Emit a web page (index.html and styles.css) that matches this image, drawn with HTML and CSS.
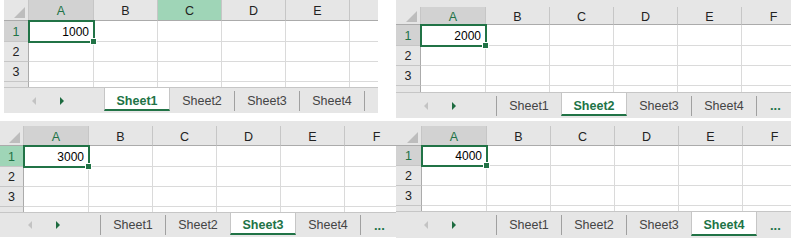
FILE: index.html
```html
<!DOCTYPE html>
<html>
<head>
<meta charset="utf-8">
<link rel="stylesheet" href="styles.css">
</head>
<body>
<div class="page">
  <div class="top">
    <div class="sheet p1">
      <div class="grid head">
        <div class="corner"><svg width="11" height="11" viewBox="0 0 11 11"><polygon points="11,0 11,11 0,11" fill="#bdbdbd"/></svg></div>
        <div class="ch sel">A</div><div class="ch">B</div><div class="ch hov">C</div><div class="ch">D</div><div class="ch">E</div><div class="ch"></div>
      </div>
      <div class="grid r1">
        <div class="rh sel">1</div><div class="c a1">1000<span class="handle"></span></div><div class="c"></div><div class="c"></div><div class="c"></div><div class="c"></div><div class="c"></div>
      </div>
      <div class="grid r2">
        <div class="rh">2</div><div class="c"></div><div class="c"></div><div class="c"></div><div class="c"></div><div class="c"></div><div class="c"></div>
      </div>
      <div class="grid r3">
        <div class="rh">3</div><div class="c"></div><div class="c"></div><div class="c"></div><div class="c"></div><div class="c"></div><div class="c"></div>
      </div>
      <div class="grid rp">
        <div class="rh"></div><div class="c"></div><div class="c"></div><div class="c"></div><div class="c"></div><div class="c"></div><div class="c"></div>
      </div>
      <div class="tabbar">
        <div class="nav"><span class="arr-l"></span><span class="arr-r"></span></div>
        <div class="tab active">Sheet1</div>
        <div class="tab">Sheet2</div><span class="sep"></span>
        <div class="tab">Sheet3</div><span class="sep"></span>
        <div class="tab">Sheet4</div><span class="sep"></span>
      </div>
    </div>

    <div class="sheet p2">
      <div class="strip"></div>
      <div class="grid head">
        <div class="corner"><svg width="11" height="11" viewBox="0 0 11 11"><polygon points="11,0 11,11 0,11" fill="#bdbdbd"/></svg></div>
        <div class="ch sel">A</div><div class="ch">B</div><div class="ch">C</div><div class="ch">D</div><div class="ch">E</div><div class="ch">F</div>
      </div>
      <div class="grid r1">
        <div class="rh sel">1</div><div class="c a1">2000<span class="handle"></span></div><div class="c"></div><div class="c"></div><div class="c"></div><div class="c"></div><div class="c"></div>
      </div>
      <div class="grid r2">
        <div class="rh">2</div><div class="c"></div><div class="c"></div><div class="c"></div><div class="c"></div><div class="c"></div><div class="c"></div>
      </div>
      <div class="grid r3">
        <div class="rh">3</div><div class="c"></div><div class="c"></div><div class="c"></div><div class="c"></div><div class="c"></div><div class="c"></div>
      </div>
      <div class="grid rp">
        <div class="rh"></div><div class="c"></div><div class="c"></div><div class="c"></div><div class="c"></div><div class="c"></div><div class="c"></div>
      </div>
      <div class="tabbar">
        <div class="nav"><span class="arr-l"></span><span class="arr-r"></span></div>
        <span class="sep"></span>
        <div class="tab">Sheet1</div>
        <div class="tab active">Sheet2</div>
        <div class="tab">Sheet3</div><span class="sep"></span>
        <div class="tab">Sheet4</div><span class="sep"></span>
        <div class="more">...</div>
      </div>
    </div>
  </div>

  <div class="bottom">
    <div class="sheet p3">
      <div class="strip"></div>
      <div class="grid head">
        <div class="corner"><svg width="11" height="11" viewBox="0 0 11 11"><polygon points="11,0 11,11 0,11" fill="#bdbdbd"/></svg></div>
        <div class="ch sel">A</div><div class="ch">B</div><div class="ch">C</div><div class="ch">D</div><div class="ch">E</div><div class="ch">F</div>
      </div>
      <div class="grid r1">
        <div class="rh hov">1</div><div class="c a1">3000<span class="handle"></span></div><div class="c"></div><div class="c"></div><div class="c"></div><div class="c"></div><div class="c"></div>
      </div>
      <div class="grid r2">
        <div class="rh">2</div><div class="c"></div><div class="c"></div><div class="c"></div><div class="c"></div><div class="c"></div><div class="c"></div>
      </div>
      <div class="grid r3">
        <div class="rh">3</div><div class="c"></div><div class="c"></div><div class="c"></div><div class="c"></div><div class="c"></div><div class="c"></div>
      </div>
      <div class="grid rp">
        <div class="rh"></div><div class="c"></div><div class="c"></div><div class="c"></div><div class="c"></div><div class="c"></div><div class="c"></div>
      </div>
      <div class="tabbar">
        <div class="nav"><span class="arr-l"></span><span class="arr-r"></span></div>
        <span class="sep"></span>
        <div class="tab">Sheet1</div><span class="sep"></span>
        <div class="tab">Sheet2</div>
        <div class="tab active">Sheet3</div>
        <div class="tab">Sheet4</div><span class="sep"></span>
        <div class="more">...</div>
      </div>
    </div>

    <div class="sheet p4">
      <div class="strip"></div>
      <div class="grid head">
        <div class="corner"><svg width="11" height="11" viewBox="0 0 11 11"><polygon points="11,0 11,11 0,11" fill="#bdbdbd"/></svg></div>
        <div class="ch sel">A</div><div class="ch">B</div><div class="ch">C</div><div class="ch">D</div><div class="ch">E</div><div class="ch">F</div>
      </div>
      <div class="grid r1">
        <div class="rh sel">1</div><div class="c a1">4000<span class="handle"></span></div><div class="c"></div><div class="c"></div><div class="c"></div><div class="c"></div><div class="c"></div>
      </div>
      <div class="grid r2">
        <div class="rh">2</div><div class="c"></div><div class="c"></div><div class="c"></div><div class="c"></div><div class="c"></div><div class="c"></div>
      </div>
      <div class="grid r3">
        <div class="rh">3</div><div class="c"></div><div class="c"></div><div class="c"></div><div class="c"></div><div class="c"></div><div class="c"></div>
      </div>
      <div class="grid rp">
        <div class="rh"></div><div class="c"></div><div class="c"></div><div class="c"></div><div class="c"></div><div class="c"></div><div class="c"></div>
      </div>
      <div class="tabbar">
        <div class="nav"><span class="arr-l"></span><span class="arr-r"></span></div>
        <span class="sep"></span>
        <div class="tab">Sheet1</div><span class="sep"></span>
        <div class="tab">Sheet2</div><span class="sep"></span>
        <div class="tab">Sheet3</div>
        <div class="tab active">Sheet4</div>
        <div class="more">...</div>
      </div>
    </div>
  </div>
</div>
</body>
</html>
```
FILE: styles.css
```css
* { box-sizing: border-box; }
html, body { margin: 0; padding: 0; background: #fff; }
body {
  width: 791px;
  height: 241px;
  overflow: hidden;
  font-family: "Liberation Sans", Arial, sans-serif;
}
.page { display: flex; flex-direction: column; }
.top { display: flex; align-items: flex-start; height: 121px; }
.bottom { display: flex; align-items: flex-start; }

.sheet { display: flex; flex-direction: column; overflow: hidden; background: #fff; flex: none; }
.p1 { margin-left: 4px; width: 374px; --st: 0px; --hh: 21px; --r1: 21px; --r2: 20px; --r3: 20px; --rp: 5px; --tb: 26px; --rw: 25px; }
.p2 { margin-left: 18px; width: 395px; --st: 7px; --hh: 18px; --r1: 21px; --r2: 20px; --r3: 20px; --rp: 6px; --tb: 26px; --rw: 25px; }
.p3 { width: 396px; --st: 5px; --hh: 20px; --r1: 21px; --r2: 20px; --r3: 20px; --rp: 5px; --tb: 25px; --rw: 24px; }
.p4 { width: 395px; --st: 5px; --hh: 20px; --r1: 20px; --r2: 20px; --r3: 20px; --rp: 5px; --tb: 27px; --rw: 26px; }

.strip { height: var(--st); background: #e6e6e6; flex: none; }
.grid {
  display: grid;
  grid-template-columns: var(--rw) 65px repeat(5, 64px);
  flex: none;
}
.head { height: var(--hh); background: #e6e6e6; }
.r1 { height: var(--r1); }
.r2 { height: var(--r2); }
.r3 { height: var(--r3); }
.rp { height: var(--rp); }

.corner {
  border-right: 1px solid #c6c6c6;
  border-bottom: 1px solid #ababab;
  display: flex;
  align-items: flex-end;
  justify-content: flex-end;
  padding: 0 3px 2px 0;
}
.corner svg { display: block; }
.ch {
  border-right: 1px solid #c6c6c6;
  border-bottom: 1px solid #ababab;
  display: flex;
  align-items: center;
  justify-content: center;
  font-size: 12.5px;
  color: #222;
  padding-top: 2px;
}
.ch.sel { background: #d2d2d2; color: #217346; }
.ch.hov { background: #9fd5b7; }

.rh {
  background: #e6e6e6;
  border-right: 1px solid #ababab;
  border-bottom: 1px solid #c6c6c6;
  display: flex;
  align-items: center;
  justify-content: center;
  font-size: 12.5px;
  color: #222;
  padding-top: 1px;
}
.rh.sel { background: #d2d2d2; color: #217346; }
.rh.hov { background: #9fd5b7; color: #217346; }
.rp .rh { border-bottom: none; }

.c { border-right: 1px solid #dadada; border-bottom: 1px solid #dadada; }
.rp .c { border-bottom: none; }
.a1 {
  position: relative;
  z-index: 1;
  outline: 2px solid #217346;
  outline-offset: -1px;
  display: flex;
  align-items: center;
  justify-content: flex-end;
  padding: 1px 4px 0 0;
  font-size: 12px;
  color: #000;
}
.handle {
  position: absolute;
  right: -4px;
  bottom: -4px;
  width: 7px;
  height: 7px;
  background: #217346;
  border: 1px solid #fff;
}

.tabbar {
  display: flex;
  align-items: stretch;
  height: var(--tb);
  background: #e6e6e6;
  border-top: 1px solid #c6c6c6;
  flex: none;
}
.nav {
  width: 100px;
  flex: none;
  display: flex;
  align-items: center;
  padding-left: 28px;
  gap: 24px;
}
.arr-l {
  width: 0; height: 0;
  border-top: 4px solid transparent;
  border-bottom: 4px solid transparent;
  border-right: 4px solid #c3c3c3;
}
.arr-r {
  width: 0; height: 0;
  border-top: 4px solid transparent;
  border-bottom: 4px solid transparent;
  border-left: 4px solid #1d6b40;
}
.tab {
  width: 64px;
  flex: none;
  display: flex;
  align-items: center;
  justify-content: center;
  font-size: 12.5px;
  color: #444;
}
.tab.active {
  width: 66px;
  background: #fff;
  border-left: 1px solid #c6c6c6;
  border-right: 1px solid #c6c6c6;
  border-bottom: 2px solid #217346;
  margin-bottom: 2px;
  padding-top: 4px;
  font-weight: bold;
  color: #217346;
}
.sep {
  width: 1px;
  flex: none;
  align-self: center;
  height: 20px;
  background: #a0a0a0;
}
.more {
  padding-left: 13px;
  display: flex;
  align-items: center;
  font-size: 13px;
  font-weight: bold;
  color: #217346;
}
```
